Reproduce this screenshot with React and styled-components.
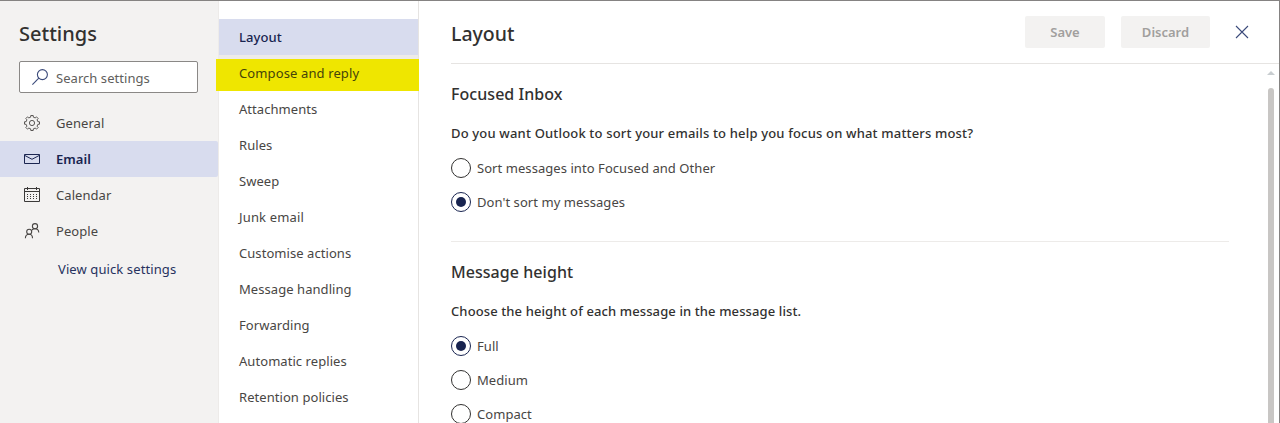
import React from "react";
import styled, { createGlobalStyle } from "styled-components";

const categories = [
  { name: "General", icon: <GearIcon /> },
  { name: "Email", icon: <MailIcon />, active: true },
  { name: "Calendar", icon: <CalendarIcon /> },
  { name: "People", icon: <PeopleIcon /> },
];

const pages = [
  { name: "Layout", active: true },
  { name: "Compose and reply", marked: true, spacing: 0.12 },
  { name: "Attachments" },
  { name: "Rules" },
  { name: "Sweep" },
  { name: "Junk email", spacing: 0.15 },
  { name: "Customise actions" },
  { name: "Message handling" },
  { name: "Forwarding" },
  { name: "Automatic replies" },
  { name: "Retention policies" },
];

export default function App() {
  return (
    <>
      <GlobalStyle />
      <Dialog>
        <Sidebar>
          <Title>Settings</Title>
          <SearchBox>
            <SearchIcon />
            <span>Search settings</span>
          </SearchBox>
          {categories.map((c) => (
            <Category key={c.name} $active={c.active}>
              {c.icon}
              <Label>{c.name}</Label>
            </Category>
          ))}
          <QuickLink>View quick settings</QuickLink>
        </Sidebar>
        <Nav>
          {pages.map((p) => (
            <NavItem key={p.name} $active={p.active} $marked={p.marked}>
              {p.marked && <Marker />}
              <Label $spacing={p.spacing}>{p.name}</Label>
            </NavItem>
          ))}
        </Nav>
        <Main>
          <Header>
            <PageTitle>Layout</PageTitle>
            <Button $width={80}>Save</Button>
            <Button $width={89}>Discard</Button>
            <CloseIcon />
          </Header>
          <Body>
            <Content>
              <Section>
                <SectionTitle>Focused Inbox</SectionTitle>
                <Question $spacing={0.17}>
                  Do you want Outlook to sort your emails to help you focus on what matters most?
                </Question>
                <Option>
                  <Radio />
                  <Label>Sort messages into Focused and Other</Label>
                </Option>
                <Option>
                  <Radio $checked />
                  <Label>Don't sort my messages</Label>
                </Option>
              </Section>
              <Section>
                <SectionTitle>Message height</SectionTitle>
                <Question $spacing={0.11}>Choose the height of each message in the message list.</Question>
                <Option>
                  <Radio $checked />
                  <Label>Full</Label>
                </Option>
                <Option>
                  <Radio />
                  <Label>Medium</Label>
                </Option>
                <Option>
                  <Radio />
                  <Label>Compact</Label>
                </Option>
              </Section>
            </Content>
            <Scrollbar>
              <ScrollArrow />
              <ScrollThumb />
            </Scrollbar>
          </Body>
        </Main>
      </Dialog>
    </>
  );
}

function SearchIcon() {
  return (
    <svg width="16" height="16" viewBox="0 0 16 16" fill="none" stroke="#3b4a7a" strokeWidth="1.1">
      <circle cx="10.4" cy="5.6" r="5" />
      <path d="M6.8 9.2L0.4 15.6" />
    </svg>
  );
}

// eight teeth, four corners each
const gearPoints = Array.from({ length: 8 })
  .flatMap((_, i) =>
    [
      [-13, 6],
      [-9, 7.6],
      [9, 7.6],
      [13, 6],
    ].map(([offset, r]) => {
      const angle = ((i * 45 + offset) * Math.PI) / 180;
      return `${(8 + r * Math.sin(angle)).toFixed(2)},${(8 - r * Math.cos(angle)).toFixed(2)}`;
    })
  )
  .join(" ");

function GearIcon() {
  return (
    <svg width="16" height="16" viewBox="0 0 16 16" fill="none" stroke="#484644" strokeWidth="0.9">
      <circle cx="8" cy="8" r="2.6" />
      <polygon points={gearPoints} strokeLinejoin="round" />
    </svg>
  );
}

function MailIcon() {
  return (
    <svg width="16" height="16" viewBox="0 0 16 16" fill="none" stroke="#1b2550" strokeWidth="1">
      <path d="M0.5 3.5h15v9H0.5z" />
      <path d="M0.5 4.3L8 8.3l7.5-4" />
    </svg>
  );
}

function CalendarIcon() {
  return (
    <svg width="16" height="16" viewBox="0 0 16 16" fill="none" stroke="#3b3a39" strokeWidth="1">
      <path d="M0.5 1.5h15v13H0.5zM0.5 4.5h15M3.5 0v3M12.5 0v3" />
      <path d="M3 7.5h10M3 9.5h10M3 11.5h10" strokeDasharray="1 2" />
    </svg>
  );
}

function PeopleIcon() {
  return (
    <svg width="16" height="16" viewBox="0 0 16 16" fill="none" stroke="#484644" strokeWidth="1.1">
      <circle cx="5.2" cy="8.8" r="2.5" />
      <path d="M1.4 15.3c0-2.5 1.5-4 3.8-4s3.3 1.5 3.3 4" />
      <circle cx="11" cy="3.2" r="2.6" />
      <path d="M8 7c.8-.8 1.800-1.200 3-1.200 2.200 0 3.600 1.400 3.800 3.700" />
    </svg>
  );
}

function CloseIcon() {
  return (
    <CloseSvg width="14" height="14" viewBox="0 0 14 14" fill="none" stroke="#3b4a7a" strokeWidth="1.1">
      <path d="M1 1l12 12M13 1L1 13" />
    </CloseSvg>
  );
}

const GlobalStyle = createGlobalStyle`
  * {
    box-sizing: border-box;
  }

  body {
    margin: 0;
    overflow: hidden;
    color: #323130;
    font-family: "Noto Sans", "Open Sans", sans-serif;
    font-size: 13px;
  }
`;

const Dialog = styled.div`
  display: flex;
  width: 100%;
  height: 423px;
  overflow: hidden;
  background-color: white;
  border-top: 1px solid #858382;
  border-right: 1px solid #858382;
`;

const Sidebar = styled.aside`
  display: flex;
  flex-direction: column;
  flex: none;
  width: 219px;
  background-color: #f3f2f1;
  border-right: 1px solid #edebe9;
`;

const Title = styled.h1`
  margin: 18px 0 0 19px;
  font-size: 20px;
  line-height: 30px;
  font-weight: 500;
`;

const SearchBox = styled.div`
  display: flex;
  align-items: center;
  gap: 8px;
  width: 179px;
  height: 32px;
  margin: 12px 0 12px 19px;
  padding-left: 12px;
  color: #605e5c;
  letter-spacing: 0.05px;
  background-color: white;
  border: 1px solid #8a8886;
  border-radius: 2px;

  span {
    margin-top: 1px;
  }
`;

const Category = styled.div`
  display: flex;
  align-items: center;
  gap: 16px;
  height: 36px;
  padding-left: 24px;
  color: ${(p) => (p.$active ? "#182450" : "#484644")};
  font-weight: ${(p) => (p.$active ? 600 : 400)};
  background-color: ${(p) => (p.$active ? "#d8dcee" : "transparent")};
  border-radius: 0 2px 2px 0;
`;

const Label = styled.span`
  position: relative;
  white-space: nowrap;
  letter-spacing: ${(p) => p.$spacing || 0.06}px;
`;

const QuickLink = styled.a`
  margin: 10px 0 0 58px;
  color: #27325f;
  line-height: 20px;
  letter-spacing: 0.1px;
`;

const Nav = styled.nav`
  flex: none;
  width: 200px;
  padding-top: 18px;
  border-right: 1px solid #e6e4e2;
`;

const NavItem = styled.div`
  position: relative;
  display: flex;
  align-items: center;
  height: 36px;
  padding-left: 20px;
  color: ${(p) => (p.$active ? "#182450" : p.$marked ? "#45430a" : "#484644")};
  font-weight: ${(p) => (p.$active ? 500 : 400)};
  background-color: ${(p) => (p.$active ? "#d8dcee" : p.$marked ? "#edebe9" : "transparent")};
`;

/* highlighter stroke, slightly wider than the row */
const Marker = styled.div`
  position: absolute;
  top: 4px;
  right: -1px;
  bottom: 0;
  left: -3px;
  background-color: #efe600;
`;

const Main = styled.main`
  display: flex;
  flex-direction: column;
  flex: 1;
  min-width: 0;
`;

const Header = styled.header`
  display: flex;
  align-items: center;
  flex: none;
  gap: 16px;
  height: 63px;
  margin-left: 32px;
  padding-right: 30px;
  border-bottom: 1px solid #e6e4e2;
`;

const PageTitle = styled.h2`
  flex: 1;
  margin: 2px 0 0;
  font-size: 19.5px;
  font-weight: 500;
`;

const Button = styled.button`
  width: ${(p) => p.$width}px;
  height: 32px;
  padding: 0;
  color: #a19f9d;
  font-family: inherit;
  font-size: 13px;
  font-weight: 600;
  background-color: #f3f2f1;
  border: none;
  border-radius: 2px;
`;

const CloseSvg = styled.svg`
  margin-left: 9px;
`;

const Body = styled.div`
  display: flex;
  flex: 1;
  min-height: 0;
`;

const Content = styled.div`
  flex: 1;
  padding: 0 33px 0 32px;
  overflow: hidden;
`;

const Section = styled.section`
  height: 178px;
  padding-top: 18px;
  border-bottom: 1px solid #edebe9;

  &:last-child {
    border-bottom: none;
  }
`;

const SectionTitle = styled.h3`
  margin: 0 0 17px;
  font-size: 16px;
  line-height: 24px;
  font-weight: 500;
  letter-spacing: 0.05px;
`;

const Question = styled.p`
  margin: 0 0 15px;
  font-size: 13px;
  line-height: 20px;
  font-weight: 500;
  letter-spacing: ${(p) => p.$spacing}px;
  white-space: nowrap;
`;

const Option = styled.div`
  display: flex;
  align-items: center;
  gap: 6px;
  height: 20px;
  margin-bottom: 14px;
  color: #484644;
`;

const Radio = styled.span`
  display: flex;
  align-items: center;
  justify-content: center;
  width: 20px;
  height: 20px;
  border: 1px solid ${(p) => (p.$checked ? "#182450" : "#323130")};
  border-radius: 50%;

  &::after {
    content: "";
    width: 10px;
    height: 10px;
    border-radius: 50%;
    background-color: ${(p) => (p.$checked ? "#182450" : "transparent")};
  }
`;

const Scrollbar = styled.div`
  display: flex;
  flex-direction: column;
  align-items: center;
  width: 17px;
  padding-top: 7px;
`;

const ScrollArrow = styled.div`
  border: 4px solid transparent;
  border-top: none;
  border-bottom-color: #c8cdd0;
`;

const ScrollThumb = styled.div`
  flex: 1;
  width: 6px;
  margin-top: 13px;
  background-color: #c8c6c4;
  border-radius: 3px 3px 0 0;
`;
